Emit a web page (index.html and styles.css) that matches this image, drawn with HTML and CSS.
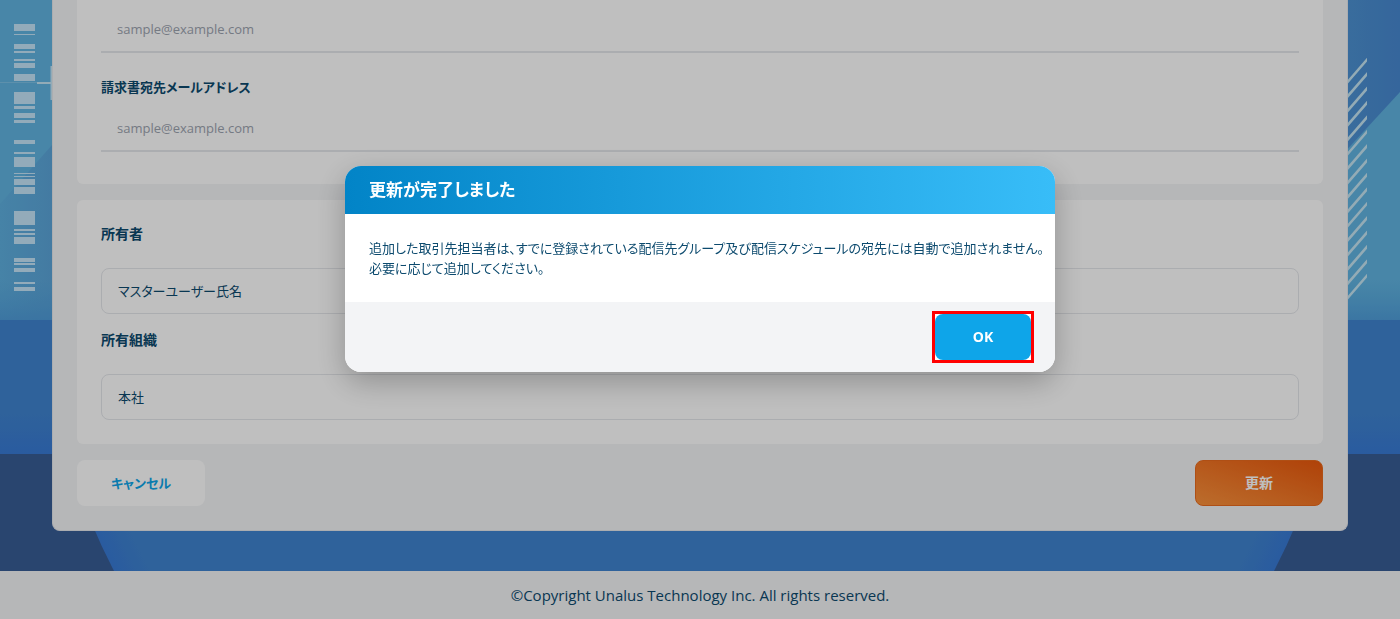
FILE: index.html
```html
<!DOCTYPE html>
<html lang="ja">
<head>
    <meta charset="UTF-8">
    <title>取引先担当者の編集</title>
    <link rel="stylesheet" href="styles.css">
</head>
<body>
    <main class="page">
        <svg class="backdrop" viewBox="0 0 1400 571" preserveAspectRatio="xMidYMin slice" aria-hidden="true">
            <defs>
                <linearGradient id="fade" x1="0" y1="0" x2="0" y2="1">
                    <stop offset="0" stop-color="#4f9fd8" stop-opacity="0"/>
                    <stop offset="1" stop-color="#4b98d8" stop-opacity="0.8"/>
                </linearGradient>
                <linearGradient id="band" x1="0" y1="0" x2="0" y2="1">
                    <stop offset="0.7" stop-color="#3f83cf"/>
                    <stop offset="1" stop-color="#387ad5"/>
                </linearGradient>
                <linearGradient id="left" gradientUnits="userSpaceOnUse" x1="0" y1="0" x2="60" y2="0">
                    <stop offset="0" stop-color="#5eafdf"/>
                    <stop offset="1" stop-color="#5aa3d8"/>
                </linearGradient>
                <linearGradient id="right" gradientUnits="userSpaceOnUse" x1="1348" y1="0" x2="1400" y2="0">
                    <stop offset="0" stop-color="#4c91d2"/>
                    <stop offset="1" stop-color="#4788d0"/>
                </linearGradient>
                <radialGradient id="disc">
                    <stop offset="0.95" stop-color="#3f83cf"/>
                    <stop offset="1" stop-color="#387ad5"/>
                </radialGradient>
                <clipPath id="low"><rect x="0" y="454" width="1400" height="117"/></clipPath>
                <clipPath id="hatch"><rect x="1340" y="0" width="27" height="320"/></clipPath>
            </defs>
            <rect width="1400" height="320" fill="#60b3e0"/>
            <path d="M184 320L52 320L0 320V204L52 145L184 0H700V320Z" fill="url(#left)"/>
            <path d="M700 0H1400V92L1190 320H700Z" fill="url(#right)"/>
            <rect y="280" width="1400" height="40" fill="url(#fade)"/>
            <rect y="320" width="1400" height="134" fill="url(#band)"/>
            <rect y="454" width="1400" height="117" fill="#375c94"/>
            <circle cx="694" cy="271" r="653" fill="url(#disc)" clip-path="url(#low)"/>
            <path d="M0 82.5H37" stroke="#7cc0e6"/>
            <path d="M37 83H52M51.500 66V100" stroke="#c4e4f5" stroke-width="2"/>
            <path d="M14 24h21v7h-21zM14 34h21v1h-21zM14 44h21v5h-21zM14 51h21v2h-21zM14 59h21v2h-21zM14 63h21v5h-21zM14 74h21v7h-21zM14 92h21v12h-21zM14 106h21v3h-21zM14 113h21v5h-21zM14 120h21v3h-21zM14 140h21v4h-21zM14 152h21v2h-21zM14 157h21v10h-21zM14 173h21v1h-21zM14 176h21v1h-21zM14 179h21v6h-21zM14 187h21v7h-21zM14 211h21v14h-21zM14 229h21v2h-21zM14 233h21v2h-21zM14 237h21v7h-21zM14 258h21v4h-21zM14 263h21v2h-21zM14 268h21v4h-21zM14 282h21v2h-21zM14 287h21v4h-21z" fill="#c4e4f9"/>
            <path clip-path="url(#hatch)" stroke="#c4e4f2" stroke-width="2.6" d="M1345 85l26-30M1345 99.400l26-30M1345 113.800l26-30M1345 128.200l26-30M1345 142.600l26-30M1345 157l26-30M1345 171.400l26-30M1345 185.800l26-30M1345 200.200l26-30M1345 214.600l26-30M1345 229l26-30M1345 243.400l26-30M1345 257.800l26-30M1345 272.200l26-30M1345 286.600l26-30M1345 301l26-30"/>
        </svg>

        <form class="panel">
            <div class="card card-mail">
                <input class="line-input" type="email" placeholder="sample@example.com" aria-label="メールアドレス">
                <label for="billing">請求書宛先メールアドレス</label>
                <input class="line-input" type="email" id="billing" placeholder="sample@example.com">
            </div>
            <div class="card card-owner">
                <label for="owner">所有者</label>
                <input class="box-input" type="text" id="owner" value="マスターユーザー氏名">
                <label for="org">所有組織</label>
                <input class="box-input" type="text" id="org" value="本社">
            </div>
            <div class="actions">
                <button type="button" class="btn btn-cancel">キャンセル</button>
                <button type="button" class="btn btn-update">更新</button>
            </div>
        </form>
    </main>

    <footer class="footer">©Copyright Unalus Technology Inc. All rights reserved.</footer>

    <div class="overlay">
        <div class="modal" role="dialog" aria-labelledby="modal-title">
            <h2 class="modal-header" id="modal-title">更新が完了しました</h2>
            <p class="modal-body">追加した取引先担当者は、すでに登録されている配信先グループ及び配信スケジュールの宛先には自動で追加されません。<br>必要に応じて追加してください。</p>
            <div class="modal-footer">
                <div class="highlight">
                    <button type="button" class="btn btn-ok">OK</button>
                </div>
            </div>
        </div>
    </div>
</body>
</html>
```
FILE: styles.css
```css
* { box-sizing: border-box; }
body { margin: 0; font-family: "Open Sans", "Noto Sans CJK JP", sans-serif; font-size: 13px; line-height: 20px; font-feature-settings: "palt"; color: #0c4a6e; }
button, input { font: inherit; color: inherit; font-feature-settings: inherit; }

.page { position: relative; padding: 0 52px 40px; overflow: hidden; }
.backdrop { position: absolute; top: 0; left: 0; width: 100%; height: 100%; }

.panel { position: relative; padding: 0 24px 24px; background: #f3f4f6; border: 1px solid #e5e7eb; border-top: none; border-radius: 0 0 8px 8px; }
.card { display: flex; flex-direction: column; padding: 24px; margin-bottom: 16px; background: #fff; border-radius: 6px; }
.card label { font-weight: bold; }
.card-mail { padding-top: 6px; padding-bottom: 32px; border-radius: 0 0 6px 6px; }
.card-mail label { margin: 24px 0 8px; }
.card-owner label { margin-bottom: 24px; font-size: 14px; }
.card-owner .box-input + label { margin-top: 16px; }
.line-input { height: 47px; padding: 0 16px; border: none; border-bottom: 2px solid #e5e7eb; background: none; }
.line-input::placeholder { color: #9ca3af; opacity: 1; }
.box-input { height: 46px; padding: 0 16px 2px; border: 1px solid #e5e7eb; border-radius: 8px; background: none; }

.actions { display: flex; justify-content: space-between; }
.btn { height: 46px; border: none; border-radius: 8px; font-weight: bold; cursor: pointer; }
.btn-cancel { width: 128px; background: #fff; color: #0ea5e9; }
.btn-update { width: 128px; border: 1px solid #ea6a1c; background: linear-gradient(to top right, #fb923c, #ea580c); color: #fff; font-size: 14px; }

.footer { padding: 12px; background: #f3f4f6; font-size: 15px; line-height: 24px; text-align: center; }

.overlay { position: fixed; inset: 0; display: flex; justify-content: center; align-items: flex-start; padding-top: 166px; background: rgba(0, 0, 0, 0.25); }
.modal { width: 710px; max-width: 100%; overflow: hidden; background: #fff; border-radius: 16px; box-shadow: 0 10px 30px rgba(0, 0, 0, 0.25); }
.modal-header { margin: 0; padding: 12px 24px; background: linear-gradient(to right, #0284c7, #38bdf8); color: #fff; font-size: 17px; line-height: 24px; }
.modal-body { margin: 0; padding: 24px 0 24px 24px; }
.modal-footer { display: flex; justify-content: flex-end; padding: 12px 24px; background: #f3f4f6; }
.highlight { display: flex; background: #fff; outline: 3px solid #f00; }
.btn-ok { width: 96px; background: #0ea5e9; color: #fff; font-size: 14px; }
```
